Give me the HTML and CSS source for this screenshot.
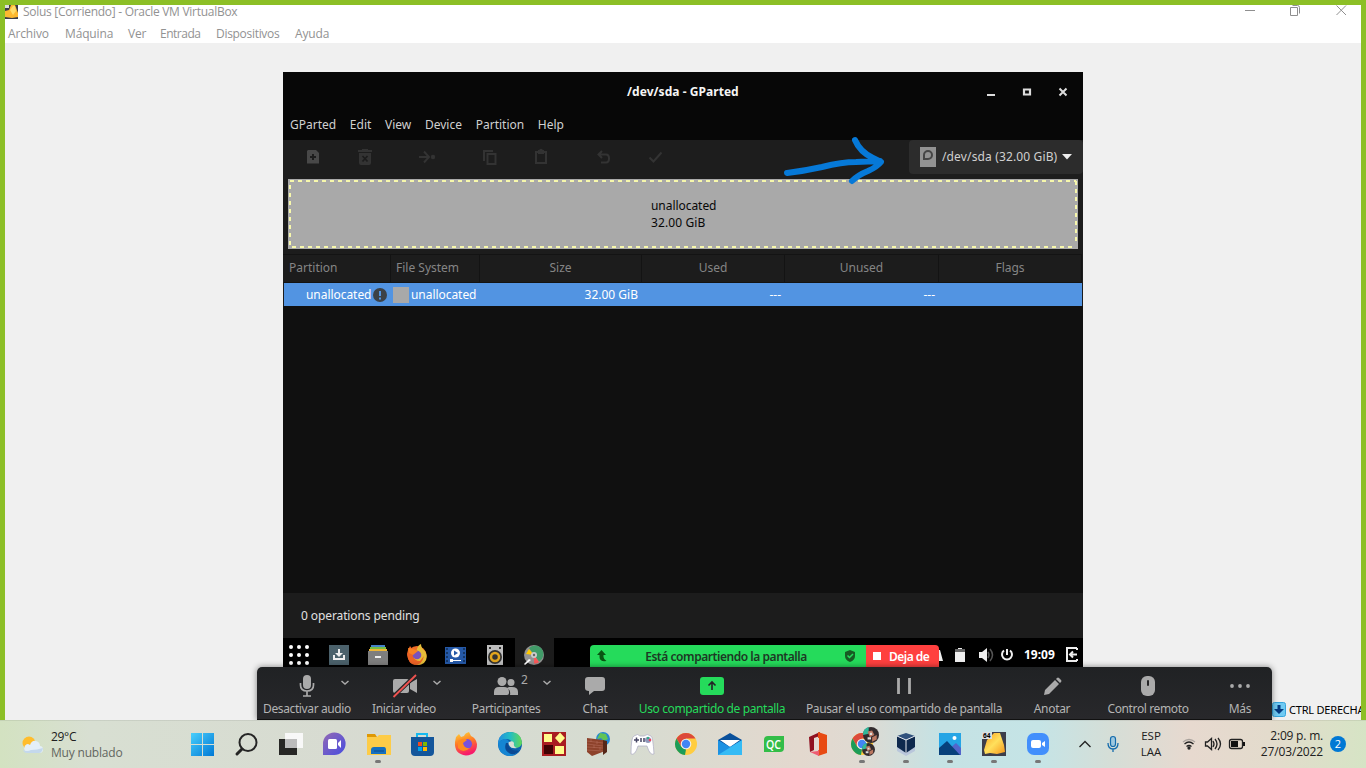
FILE: index.html
```html
<!DOCTYPE html>
<html lang="es">
<head>
<meta charset="utf-8">
<title>Solus [Corriendo] - Oracle VM VirtualBox</title>
<link rel="stylesheet" href="styles.css">
</head>
<body>
<main class="vbox">
  <header class="vbox-title">
    <svg class="vbox-icon" viewBox="0 0 13 14"><rect width="13" height="14" fill="#3a3b48"/><path d="M0 12V6l4-1 2-5h4l3 8v4l-6 1z" fill="#fdb830"/><path d="M5 5 8 1h2l1 5-3 4z" fill="#ffdc6a"/><rect width="4" height="3" fill="#ddd"/></svg>
    <span class="vbox-name">Solus [Corriendo] - Oracle VM VirtualBox</span>
    <svg class="vbox-controls" viewBox="1240 5 121 18" fill="none" stroke="#8f8f8f"><path d="M1245 10.500h10M1290.500 7.500h7v8h-7zM1292.500 5.500h5q2 0 2 2v6M1336.500 5.500l9.500 9.500m0-9.500-9.500 9.500"/></svg>
  </header>
  <nav class="vbox-menu"><span class="m1">Archivo</span><span class="m2">Máquina</span><span class="m3">Ver</span><span class="m4">Entrada</span><span class="m5">Dispositivos</span><span class="m6">Ayuda</span></nav>
  <section class="guest">
    <header class="g-title">
      <span>/dev/sda - GParted</span>
      <svg class="g-controls" viewBox="980 82 100 20"><path d="M987 94h8v2h-8z" fill="#ddd"/><path d="M1024 89.500h6v5h-6z" fill="none" stroke="#ddd" stroke-width="2.200"/><path d="m1059.500 88.500 7 7m0-7-7 7" stroke="#ddd" stroke-width="2" fill="none"/></svg>
    </header>
    <nav class="g-menu"><span>GParted</span><span>Edit</span><span>View</span><span>Device</span><span>Partition</span><span>Help</span></nav>
    <div class="g-toolbar">
      <svg class="g-tools" viewBox="283 140 400 34">
        <path d="M308 150h8l3 3v10.500h-12v-12.500z" fill="#484848"/><path d="M312 154h2v2h2v2h-2v2h-2v-2h-2v-2h2z" fill="#1c1c1c"/>
        <g fill="#333"><path d="M358 150h4v-1h6v1h4v2h-14zM359 153h12v10q0 2-2 2h-8q-2 0-2-2z"/><circle cx="433" cy="157" r="2.200"/></g>
        <path d="m362.500 156 5 5.500m0-5.500-5 5.500" stroke="#1c1c1c" stroke-width="1.700"/>
        <g fill="none" stroke="#333" stroke-width="2"><path d="M419 157h10m-5-5.500 5 5.500-5 5.500M484 161v-10h9M487.500 154h8v10h-8zM536 152h10v11h-10z"/><path d="M599 154.500h7q3 0 3 4t-3 4h-5M602 151l-3.500 3.500 3.500 3.500M649.500 157.500l4 4 8-9" /></g><rect x="538" y="150" width="6" height="4" fill="#333"/><circle cx="541" cy="150.500" r="1.800" fill="#333"/>
      </svg>
      <div class="device">
        <svg width="16" height="20" viewBox="0 0 16 20"><path d="M0 0h16v20H0z" fill="#929292"/><path d="M4 12V8a4 4 0 1 1 4 4z" fill="none" stroke="#454545" stroke-width="2"/></svg>
        <span>/dev/sda (32.00 GiB)</span>
        <svg class="drop" width="10" height="6" viewBox="0 0 10 6"><path d="M0 0h10L5 5.500z" fill="#eee"/></svg>
      </div>
    </div>
    <div class="disk">
      <svg class="dashes" viewBox="0 0 790 70" fill="none" stroke="#f7f8ac" stroke-width="2" stroke-dasharray="4 4"><path d="M2 2H788M4 68H788M2 6V66M788 2V66"/></svg>
      <div class="disk-label">unallocated<br><span class="cap">32.00 GiB</span></div>
    </div>
    <div class="row head"><span>Partition</span><span>File System</span><span>Size</span><span>Used</span><span>Unused</span><span>Flags</span></div>
    <div class="row item">
      <span class="part">unallocated<svg width="14" height="14" viewBox="0 0 14 14"><circle cx="7" cy="7" r="7" fill="#3c4148"/><path d="M6 3h2v5H6zM6 9.500h2v2H6z" fill="#5294e2"/></svg></span>
      <span class="fs"><i></i>unallocated</span><span class="num">32.00 GiB</span><span class="num">---</span><span class="num">---</span><span></span>
    </div>
    <div class="list"></div>
    <footer class="pending">0 operations pending</footer>
    <div class="g-panel">
      <svg class="g-apps" viewBox="283 638 300 29">
        <g fill="#fff"><circle cx="291" cy="647" r="2"/><circle cx="299" cy="647" r="2"/><circle cx="307" cy="647" r="2"/><circle cx="291" cy="655" r="2"/><circle cx="299" cy="655" r="2"/><circle cx="307" cy="655" r="2"/><circle cx="291" cy="663" r="2"/><circle cx="299" cy="663" r="2"/><circle cx="307" cy="663" r="2"/></g>
        <path d="M329 645h20v20h-20z" fill="#4b616b"/><path d="M338 649h2v4h3l-4 4-4-4h3zM333 655h2v3h8v-3h2v5h-12z" fill="#eee"/>
        <path d="M371 645h14v3h-14z" fill="#4582c9"/><path d="M370 647h16v3h-16z" fill="#76bd42"/><path d="M369 649h18v4h-18z" fill="#edb637"/><path d="M368 651h20v14h-20z" fill="#7e7e7e"/><path d="M375 656h6v2h-6z" fill="#eee"/>
        <circle cx="417" cy="655.500" r="9.500" fill="#ef6c27"/><path d="M417 649q1-4 4-5 0 4 4 7 4 7-1 12-7 5-11-2z" fill="#e5bd39"/><path d="M407 654q1-5 3-8l3 4 5 1-5 4q1 6 7 6l4-5q-2 9-9 9-7-1-8-11" fill="#ec6325"/><circle cx="417" cy="655" r="4.300" fill="#7953bd"/><path d="m408 648 5 1 5 2-5 4-4-2z" fill="#f88223"/>
        <path d="M445 647h21v17h-21z" fill="#2559a8"/><path d="M447 648v16m17-16v16" stroke="#153767" stroke-width="2" stroke-dasharray="2 2"/><circle cx="455.500" cy="653" r="4.500" fill="#fff"/><path d="m454 650.500 4 2.500-4 2.500z" fill="#2559a8"/><path d="M450 660.500h11" stroke="#fff"/><path d="M450 659h3v3h-3z" fill="#fff"/>
        <path d="M487 645h16v20h-16z" fill="#bdbdbd"/><circle cx="495" cy="657" r="7" fill="#333"/><circle cx="495" cy="657" r="4" fill="#333" stroke="#e2a51d" stroke-width="2.500"/><path d="M489 647h2v2h-2zM499 647h2v2h-2z" fill="#333"/>
        <path d="M515 638h39v29h-39z" fill="#1c1c1c"/><circle cx="534" cy="655" r="10" fill="#929292"/><path d="M534 655l-5-7a8.500 8.500 0 1 1 10 13.500z" fill="#419b68"/><path d="m534 655 5 7q-2 2-5 1.500z" fill="#fa5959"/><path d="m534 655-8-1 3-5z" fill="#ffc800"/><circle cx="534" cy="655" r="3" fill="#ccc"/><circle cx="534" cy="655" r="1.200" fill="#666"/><path d="m524 664 5-5 2 1-6 5z" fill="#fff"/>
      </svg>
      <svg class="g-tray" viewBox="937 638 82 29"><path d="M937 650h3l3 11h-6zM955 649h10v13h-10zM958 648h4v1h-4z" fill="#eee"/><path d="M955 649h10v3h-10z" fill="#666"/><path d="M979 652h3l5-4v14l-5-4h-3z" fill="#eee"/><path d="M988 652q2 3 0 6m2-9q5 6 0 12" fill="none" stroke="#555" stroke-width="1.500"/><path d="M1004 650.500a5 5 0 1 0 6 0M1007 649v6" stroke="#eee" stroke-width="2" fill="none"/></svg>
      <b>19:09</b>
      <svg width="12" height="15" viewBox="0 0 12 15"><path d="M11 1H1v13h10M11 1v2M11 12v2M4 7.500h7M7 4.500l-3 3 3 3" fill="none" stroke="#eee" stroke-width="2"/></svg>
    </div>
  </section>
  <div class="hostkey"><svg width="14" height="15" viewBox="0 0 14 15"><rect x=".5" y=".5" width="13" height="14" rx="2" fill="#70caf3" stroke="#36a4dc"/><path d="M5.500 3h3v4H12L7 12 2 7h3.500z" fill="#043a80"/></svg><span>CTRL DERECHA</span></div>
</main>

<div class="share"><div class="sharing"><svg width="10" height="12" viewBox="0 0 10 12"><path d="M4.500 0 9 5H6.500v2q0 2 3 4-7 1-7-4V5H0z" fill="#0a5513"/></svg><b>Está compartiendo la pantalla</b><svg width="10" height="12" viewBox="0 0 10 12"><path d="M5 0 10 2v4q0 4-5 6-5-2-5-6V2z" fill="#175b23"/><path d="m2.500 5.500 2 2 3.500-3.500" fill="none" stroke="#25db5b" stroke-width="1.500"/></svg></div><div class="stop"><i></i><b>Deja de</b></div></div>

<div class="meeting">
  <div><svg viewBox="257 667 100 34"><rect x="303" y="675" width="8" height="14" rx="4" fill="#aaa"/><path d="M300.500 683v2q0 6 6.500 6t6.500-6v-2M307 691v5M303 696h8" fill="none" stroke="#aaa" stroke-width="1.700"/><path d="m341.500 681 3.500 3 3.500-3" fill="none" stroke="#aaa" stroke-width="1.500"/></svg><span class="z1">Desactivar audio</span></div>
  <div><svg viewBox="357 667 94 34"><rect x="393" y="679" width="16" height="14" rx="2" fill="#aaa"/><path d="m410 683 7-4v14l-7-4z" fill="#aaa"/><path d="m393.500 696.500 22-21" stroke="#242426" stroke-width="4"/><path d="m393.500 697 22.500-22" stroke="#ef5350" stroke-width="1.800"/><path d="m433.500 681 3.500 3 3.500-3" fill="none" stroke="#aaa" stroke-width="1.500"/></svg><span class="z2">Iniciar video</span></div>
  <div><svg viewBox="451 667 110 34" fill="#aaa"><circle cx="502" cy="681.500" r="4.500"/><circle cx="511" cy="682.500" r="3.500"/><path d="M494 695v-3q0-5 5-5h5q5 0 5 5v1q0 2-2 2zM509 687h3q6 0 6 5v3h-8q1-5-3-7z"/><text x="521" y="684" font-size="12">2</text><path d="m543.500 681 3.500 3 3.500-3" fill="none" stroke="#aaa" stroke-width="1.500"/></svg><span class="z3">Participantes</span></div>
  <div><svg viewBox="561 667 68 34"><path d="M588 677h14q3 0 3 3v8q0 3-3 3h-8l-5 4v-4q-4 0-4-3v-8q0-3 3-3" fill="#aaa"/></svg><span class="z4">Chat</span></div>
  <div class="active"><svg viewBox="629 667 166 34"><rect x="700" y="677" width="24" height="18" rx="3" fill="#25db5b"/><path d="M712 690v-8m-3.500 3.500 3.500-3.500 3.500 3.500" fill="none" stroke="#242426" stroke-width="1.600"/></svg><span class="z5">Uso compartido de pantalla</span></div>
  <div><svg viewBox="795 667 218 34"><path d="M898.500 678v16M909.500 678v16" stroke="#aaa" stroke-width="2.800"/></svg><span class="z6">Pausar el uso compartido de pantalla</span></div>
  <div><svg viewBox="1013 667 78 34" fill="#aaa"><path d="m1044 695 1-5 10-10 4 4-10 10zM1056 679l1-1q1-1 2 0l2 2q1 1 0 2l-1 1z"/></svg><span class="z7">Anotar</span></div>
  <div><svg viewBox="1091 667 114 34"><rect x="1141" y="676" width="14" height="20" rx="6" fill="#aaa"/><rect x="1147" y="680" width="2" height="6" rx="1" fill="#242426"/></svg><span class="z8">Control remoto</span></div>
  <div><svg viewBox="1205 667 67 34" fill="#aaa"><circle cx="1232" cy="686" r="1.900"/><circle cx="1240" cy="686" r="1.900"/><circle cx="1248" cy="686" r="1.900"/></svg><span class="z9">Más</span></div>
</div>

<footer class="taskbar">
  <svg width="0" height="0" class="defs"><defs>
    <linearGradient id="win" x2="1" y2="1"><stop stop-color="#49cffc"/><stop offset="1" stop-color="#0078d5"/></linearGradient>
    <linearGradient id="fox" x2=".3" y2="1"><stop stop-color="#ffdd3b"/><stop offset=".5" stop-color="#ff7b25"/><stop offset="1" stop-color="#f71b6b"/></linearGradient>
    <linearGradient id="edge"><stop stop-color="#238de0"/><stop offset=".5" stop-color="#22bdc5"/><stop offset="1" stop-color="#64d955"/></linearGradient>
    <linearGradient id="chat" x2="1" y2="1"><stop stop-color="#9469b4"/><stop offset="1" stop-color="#474de0"/></linearGradient>
    <linearGradient id="cell" x2="1" y2="1"><stop stop-color="#f99f22"/><stop offset=".5" stop-color="#ffe05c"/><stop offset="1" stop-color="#f6971d"/></linearGradient>
    <symbol id="chrome" viewBox="0 0 22 22"><circle cx="11" cy="11" r="11" fill="#ffcd40"/><path d="M1.500 5.500A11 11 0 0 1 20.500 5.500H11L6.200 13.800z" fill="#dc493b"/><path d="M1.500 5.500 6.200 13.800 11 16.500 10 22A11 11 0 0 1 1.500 5.500" fill="#1c9c58"/><circle cx="11" cy="11" r="5.300" fill="#f4eee7"/><circle cx="11" cy="11" r="4.200" fill="#4285f4"/></symbol>
    <symbol id="avatar" viewBox="0 0 14 14"><circle cx="7" cy="7" r="7" fill="#322b2d"/><path d="M0 7a7 7 0 0 1 5-7v6z" fill="#32b89a"/><path d="m4 4 4-1 2 4-4 2zM8 9l4-2v4l-4 2z" fill="#bb7861"/><path d="M6 5h2v2H6zM4 9h3v2H4z" fill="#ddd"/></symbol>
  </defs></svg>
  <div class="weather"><svg width="22" height="18" viewBox="0 0 22 18"><circle cx="7" cy="7" r="6.500" fill="#ffbd2d"/><path d="M5 17a5 5 0 0 1 0-9q2 0 3 1 2-5 6-4 4 1 4 5 3 0 3 3.500t-4 3.500z" fill="#e4eff8"/><path d="M1 14q4 2 8 0 6 0 12-2-1 5-4 5H5q-3 0-4-3" fill="#c4d8ec"/></svg><div><span class="temp">29°C</span><span class="cond">Muy nublado</span></div></div>
  <div class="apps">
    <svg viewBox="0 0 44 48"><path d="M11 13h11v11H11zM23 13h11v11H23zM11 25h11v11H11zM23 25h11v11H23z" fill="url(#win)"/></svg>
    <svg viewBox="0 0 44 48" fill="none" stroke="#252525" stroke-linecap="round"><circle cx="24" cy="22.500" r="8.500" stroke-width="2"/><path d="m18 29-5 5" stroke-width="3"/></svg>
    <svg viewBox="0 0 44 48"><path d="M11 19h18v16H11z" fill="#272725"/><path d="M17 13h18v15H17z" fill="#f8f8f8"/><path d="M17 19h12v9H17z" fill="#bcbcbc"/></svg>
    <svg viewBox="0 0 44 48"><path d="M11 35V24A11.300 11.300 0 1 1 22 35z" fill="url(#chat)"/><rect x="16" y="19" width="9" height="10" rx="1.500" fill="#fff"/><path d="m26 23 3-3v8l-3-3z" fill="#fff"/></svg>
    <svg viewBox="0 0 44 48"><path d="M11 14h8l2 3H11z" fill="#df9804"/><path d="M11 17h10l2-2h12v20H11z" fill="#fdcc48"/><path d="M15 34v-4q0-3 3-3h10q2 0 2 3v4z" fill="#1670bf"/><path d="M18 31h10" stroke="#0a4b8b"/><rect x="19" y="40" width="6" height="3" rx="1.500" fill="#777"/></svg>
    <svg viewBox="0 0 44 48"><path d="M17 18v-4h10v4" fill="none" stroke="#16b9ef" stroke-width="2"/><path d="M11 17h23v15q0 4-4 4H15q-4 0-4-4z" fill="#14569b"/><path d="M18 22h4v4h-4z" fill="#f34c20"/><path d="M23 22h4v4h-4z" fill="#7cb900"/><path d="M18 27h4v4h-4z" fill="#00a3ec"/><path d="M23 27h4v4h-4z" fill="#ffb900"/></svg>
    <svg viewBox="0 0 44 48"><path d="M12 17l3-3 2 3 3-1q1-3 5-4l2 4q5 2 6 8 0 11-11 11.500Q10 34 11 22z" fill="url(#fox)"/><circle cx="23" cy="24" r="5" fill="#7951dd"/><path d="M14 21q6-4 9-1l-4 3q1 6 7 5-7 6-12 0" fill="#ff8b20"/></svg>
    <svg viewBox="0 0 44 48"><circle cx="22" cy="24" r="12" fill="#0b60ab"/><path d="M10 22Q12 12 22 12q11 0 12 11-1 5-7 5h-4q3-9-5-9-6 0-8 6" fill="url(#edge)"/><path d="M10 23q8-8 12 0-4 4 1 8 5 2 9-2-5 8-12 7-10-2-10-13" fill="#1585d3"/><path d="M18 23q-3 8 5 11 5 1 9-4-3 1-7 0-6-3-4-7z" fill="#0a4994"/><path d="M21 22q4-2 5 1-1 4 3 5-6 1-8-3-1-2 0-3" fill="#d9ddd5"/></svg>
    <svg viewBox="0 0 44 48"><path d="M10 12h24v24H10z" fill="#a91c21"/><path d="M12 14h8v8h-8zM23 26h9v8h-9zM28 12.500l5 5.500-5 5.500-5-5.500z" fill="#fffa8b"/><path d="M12 25h9v9h-9z" fill="#400204"/></svg>
    <svg viewBox="0 0 44 48"><circle cx="27" cy="19" r="7" fill="#2688d3"/><path d="m24 13 6 1 2 5-4 2-3-3-4 1z" fill="#61c456"/><path d="m11 18 16 2 2 11-13 5-5-4z" fill="#8d422b"/><path d="m27 20 4 1v11l-4 3z" fill="#562719"/><path d="m11 21 16 2m-16 1 16 2m-16 1 16 1m-16 2 16 1M15 19v3m6-1v3m-3 1v3m6-1v3" stroke="#b97360" stroke-width=".5" fill="none"/></svg>
    <svg viewBox="0 0 44 48"><path d="M14 16q4-3 6 0h4q3-3 7 0 2 1 3 18-4 2-7-8h-9q-3 10-7 8 0-17 3-18z" fill="#fff" stroke="#aaa9c2" stroke-width=".7"/><path d="M14 20h5m-2.500-2.500v5M21 18v4m3-4v4" stroke="#444463" stroke-width="1.500"/><circle cx="28" cy="20" r="3" fill="#9098ba"/><circle cx="30" cy="20" r="1.300" fill="#ee405a"/><circle cx="28" cy="18" r="1.200" fill="#3aa98a"/></svg>
    <svg viewBox="0 0 44 48"><use href="#chrome" x="11" y="13" width="22" height="22"/></svg>
    <svg viewBox="0 0 44 48"><path d="m10 20 12-7 12 7v10H10z" fill="#0a509b"/><path d="M12 20h20l-10 7z" fill="#fff"/><path d="M10 20v15h24V20l-12 7z" fill="#1c91e2"/><path d="m10 35 24-15v15z" fill="#35bbf5"/></svg>
    <svg viewBox="0 0 44 48"><path d="M16 16h16v12q0 4-4 4H12V20q0-4 4-4" fill="#33bd48"/><text x="14" y="28.500" font-size="12" font-weight="600" fill="#fff" textLength="15" lengthAdjust="spacingAndGlyphs">QC</text></svg>
    <svg viewBox="0 0 44 48"><path d="m13 17 11-5v4l-6 2v12l-4 2z" fill="#8f1020"/><path d="m22 12 9 3v18l-9 3z" fill="#e84a13"/><path d="m14 32 8-1 1-15v20z" fill="#ee5c72"/><path d="M18 18h5v12h-5z" fill="#e3d9d2"/></svg>
    <svg viewBox="0 0 44 48"><use href="#chrome" x="11" y="13" width="22" height="22"/><use href="#avatar" x="23" y="7" width="16" height="16"/><use href="#avatar" x="22" y="23" width="13" height="13"/><rect x="19" y="40" width="6" height="3" rx="1.500" fill="#777"/></svg>
    <svg viewBox="0 0 44 48"><path d="m13 27 9 4 9-4v4l-9 5-9-5z" fill="#b9c6db"/><path d="m13 16 9 4 9-4v11l-9 6-9-6z" fill="#0e294d"/><path d="m13 16 9-3 9 3-9 4z" fill="#31527d"/><path d="m13 16 9 4 9-4M22 20v13" stroke="#e5e8ee" fill="none"/><rect x="19" y="40" width="6" height="3" rx="1.500" fill="#777"/></svg>
    <svg viewBox="0 0 44 48"><path d="M11 13h22v22H11z" fill="#25a5e5"/><path d="m21 29 7-6 5 5v7H22z" fill="#5265cb"/><path d="m11 28 8-7 13 14H11z" fill="#07417b"/><circle cx="26.500" cy="18" r="2" fill="#fff"/><rect x="19" y="40" width="6" height="3" rx="1.500" fill="#777"/></svg>
    <svg viewBox="0 0 44 48"><path d="M10 12h24v24H10z" fill="#3d3e4b"/><path d="m12 30 3-10 7-7h6l4 12 1 7-8 2-7-1-5 1z" fill="url(#cell)"/><path d="M10 12h10v7H10z" fill="#ddd"/><text x="11" y="18" font-size="6.500" font-weight="700">64</text><rect x="19" y="40" width="6" height="3" rx="1.500" fill="#777"/></svg>
    <svg viewBox="0 0 44 48"><rect x="11" y="13" width="22" height="22" rx="7" fill="#428ffc"/><rect x="15" y="20" width="10" height="8" rx="2" fill="#fff"/><path d="m26 23 3-2v6l-3-2z" fill="#fff"/><rect x="19" y="40" width="6" height="3" rx="1.500" fill="#777"/></svg>
  </div>
  <svg class="tray-a" viewBox="1074 720 50 48" fill="none"><path d="m1079.500 747 5.500-5.500 5.500 5.500" stroke="#242424" stroke-width="1.400"/><rect x="1110.500" y="736.500" width="5" height="10" rx="2.500" stroke="#146bac" stroke-width="1.200" fill="#9dc8df"/><path d="M1108 743q0 6 5 6t5-6M1113 749v3" stroke="#146bac" stroke-width="1.300"/></svg>
  <div class="lang"><span>ESP</span><span>LAA</span></div>
  <svg class="tray-b" viewBox="1178 720 72 48" fill="none" stroke="#222" stroke-width="1.300"><path d="M1183 742q6-5 12 0" stroke="#aaa39e"/><path d="M1184.500 744q4.500-4 9 0M1186.500 746.500q2.500-2 5 0"/><circle cx="1189" cy="748" r="1" fill="#222"/><path d="M1205.500 742h2l4-3.500v11l-4-3.500h-2zM1213 741q2 3 0 6m2-8q4 5 0 10m3-11q5 6 0 12"/><rect x="1229.500" y="739.500" width="13" height="9" rx="2"/><path d="M1231 741h7v6h-7zM1243 742h2v4h-2z" fill="#111" stroke="none"/></svg>
  <div class="clock"><span class="time">2:09 p. m.</span><span class="date">27/03/2022</span></div>
  <span class="notes">2</span>
</footer>
<svg class="pen" width="104" height="50" viewBox="782 136 104 50" fill="none" stroke="#0679d8" stroke-linecap="round" stroke-linejoin="round"><path d="M787 173q17-2 35-6 20-5 34-5l24-1M855 140q5 12 18 18l8 4q-4 5-13 9-10 4-16 10" stroke-width="6"/></svg>
</body>
</html>
```
FILE: styles.css
```css
* { box-sizing: border-box; }
body { margin: 0; width: 1366px; height: 768px; overflow: hidden; position: relative; display: grid; grid-template-rows: 720px 48px; font-family: "Noto Sans", sans-serif; font-size: 12px; background: #f0f0f0; }
svg { display: block; flex: none; }
span, b { white-space: nowrap; }

/* VirtualBox window */
.vbox { border: 5px solid #8cbf26; border-bottom: 0; background: #f0f0f0; display: flex; flex-direction: column; align-items: flex-start; overflow: hidden; position: relative; }
.vbox-title { width: 1356px; height: 18px; background: #fff; display: flex; color: #929292; }
.vbox-icon { width: 13px; height: 14px; margin-right: 5px; }
.vbox-name { font-family: "Open Sans", sans-serif; line-height: 14px; font-size: 12px; letter-spacing: -0.28px; }
.vbox-controls { width: 121px; height: 18px; margin-left: auto; }
.vbox-menu { width: 1356px; height: 20px; background: #fff; display: grid; grid-template-columns: 57px 63px 32px 56px 79px 60px; padding-left: 3px; line-height: 22px; color: #929292; font-family: "Open Sans", sans-serif; }
.m1, .m2, .m3, .m5, .m6 { letter-spacing: -0.15px; }
.m4 { letter-spacing: -0.5px; }
.m5 { letter-spacing: -0.3px; }

/* Guest screen */
.guest { width: 800px; height: 648px; margin: 29px 0 0 278px; background: #1c1c1c; color: #d0d0d0; display: flex; flex-direction: column; flex: none; }
.g-title { height: 40px; background: #070707; color: #f5f5f5; font-weight: 700; display: flex; align-items: center; justify-content: space-between; padding: 0 3px 2px 344px; letter-spacing: .05px; }
.g-controls { width: 100px; height: 20px; margin-top: 2px; }
.g-menu { height: 28px; background: #070707; display: flex; gap: 13.7px; padding-left: 7px; line-height: 25px; }
.g-toolbar { height: 39px; display: flex; justify-content: space-between; background: #1d1d1d; }
.g-tools { width: 400px; height: 34px; }
.device { width: 174px; height: 34px; background: #2c2c2c; border-radius: 4px; display: flex; align-items: center; padding-left: 11px; }
.device span { margin: -2px 5px 0 6px; letter-spacing: .14px; }
.disk { position: relative; width: 790px; height: 70px; margin-left: 5px; background: #a9a9a9; color: #080808; display: flex; align-items: center; }
.dashes { position: absolute; inset: 0; width: 790px; height: 70px; }
.disk-label { margin-left: 363px; line-height: 17px; letter-spacing: -.05px; }
.cap { letter-spacing: .1px; }
.row { display: grid; grid-template-columns: 108px 89px 162px 143px 154px 143px; width: 799px; }
.head { margin-top: 5px; height: 29px; line-height: 25px; color: #858585; border-top: 1px solid #131313; border-bottom: 1px solid #131313; }
.head span { text-align: center; border-right: 1px solid #131313; }
.head span:first-child { text-align: left; padding-left: 6px; }
.head span:nth-child(2) { text-align: left; padding-left: 5px; }
.item { background: #5294e2; color: #fff; height: 23px; line-height: 23px; margin-left: 1px; width: 798px; grid-template-columns: 107px 88px 162px 143px 154px 144px; }
.part { padding-left: 22px; display: flex; align-items: center; gap: 2px; }
.part, .fs { letter-spacing: -.05px; }
.fs { display: flex; align-items: center; gap: 2px; padding-left: 2px; }
.fs i { width: 16px; height: 16px; background: #a9a9a9; }
.num { text-align: right; padding-right: 3px; }
.list { height: 287px; background: #101010; }
.pending { height: 45px; line-height: 46px; padding-left: 18px; color: #e0e0e0; background: #1c1c1c; letter-spacing: -.1px; }
.g-panel { height: 29px; background: #000; display: flex; align-items: center; }
.g-apps { width: 300px; height: 29px; }
.g-tray { width: 82px; height: 29px; margin-left: 354px; }
.g-panel b { color: #fff; margin: 4px 11px 0 5px; }
.g-panel > svg:last-child { margin-top: 4px; }
.hostkey { position: absolute; left: 1267px; top: 697px; display: flex; gap: 3px; align-items: center; font-size: 11px; line-height: 15px; color: #000; letter-spacing: -.2px; }

/* Meeting controls */
.share { position: absolute; left: 590px; top: 645px; width: 349px; height: 22px; display: flex; border-radius: 4px 4px 0 0; overflow: hidden; color: #1d3824; line-height: 23px; }
.sharing { width: 276px; background: #25db5b; display: flex; align-items: center; padding: 0 11px 0 7px; }
.sharing b { margin: 1px auto; letter-spacing: -.45px; }
.stop { width: 73px; background: #ff403f; color: #fff; display: flex; align-items: center; padding-left: 7px; }
.stop i { width: 8px; height: 8px; background: #fff; margin-right: 8px; }
.stop b { letter-spacing: -.5px; }
.share b { font-weight: 600; }
.meeting { position: absolute; left: 257px; top: 667px; width: 1015px; height: 53px; background: linear-gradient(#202224, #28282b); border-bottom: 1px solid #111; border-radius: 5px 5px 0 0; box-shadow: 0 0 6px #0007; clip-path: inset(-8px -8px 0 -8px); display: grid; grid-template-columns: 100px 94px 110px 68px 166px 218px 78px 114px 67px; color: #b4b4b4; }
.meeting div { text-align: center; display: flex; flex-direction: column; align-items: center; }
.meeting div > svg { width: 100%; height: 34px; }
.meeting span { line-height: 16px; letter-spacing: -.38px; }
.meeting .z4, .meeting .z7, .meeting .z9 { letter-spacing: -.3px; }
.meeting .active { color: #25db5b; }
.z9 { margin-left: 3px; }

/* Windows taskbar */
.taskbar { display: flex; align-items: center; background: linear-gradient(90deg, #d3e2c1 0, #d8dfd2 90px, #d7dad1 400px, #d6dcd1 620px, #e3d8ce 800px, #dfdad2 860px, #c5e2e4 940px, #c5e4e6 1040px, #d5ded7 1110px, #e7d9cf 1190px, #e3dbcc 1270px, #d6e4c5 1366px); font-family: "Open Sans", sans-serif; color: #202020; box-shadow: inset 0 1px #0001; }
.defs { position: absolute; }
.weather { width: 179px; padding: 1px 0 0 22px; display: flex; gap: 7px; align-items: center; }
.weather span, .lang span, .clock span { display: block; line-height: 16px; }
.weather .temp { letter-spacing: -.3px; }
.weather .cond { color: #626660; letter-spacing: -.2px; }
.apps { width: 880px; display: flex; margin: 0 -.5px 0 .5px; }
.apps svg { width: 44px; height: 48px; }
.tray-a { width: 50px; height: 48px; margin-left: 15px; }
.lang { width: 54px; text-align: center; font-size: 11.500px; }
.tray-b { width: 72px; height: 48px; }
.clock { width: 73px; text-align: right; }
.clock .time { letter-spacing: -.2px; }
.clock .date { letter-spacing: -.15px; }
.notes { width: 16px; height: 16px; border-radius: 8px; background: #0078d4; color: #fff; text-align: center; line-height: 16px; font-size: 11px; margin-left: 7px; }
.pen { position: absolute; left: 782px; top: 136px; }
```
